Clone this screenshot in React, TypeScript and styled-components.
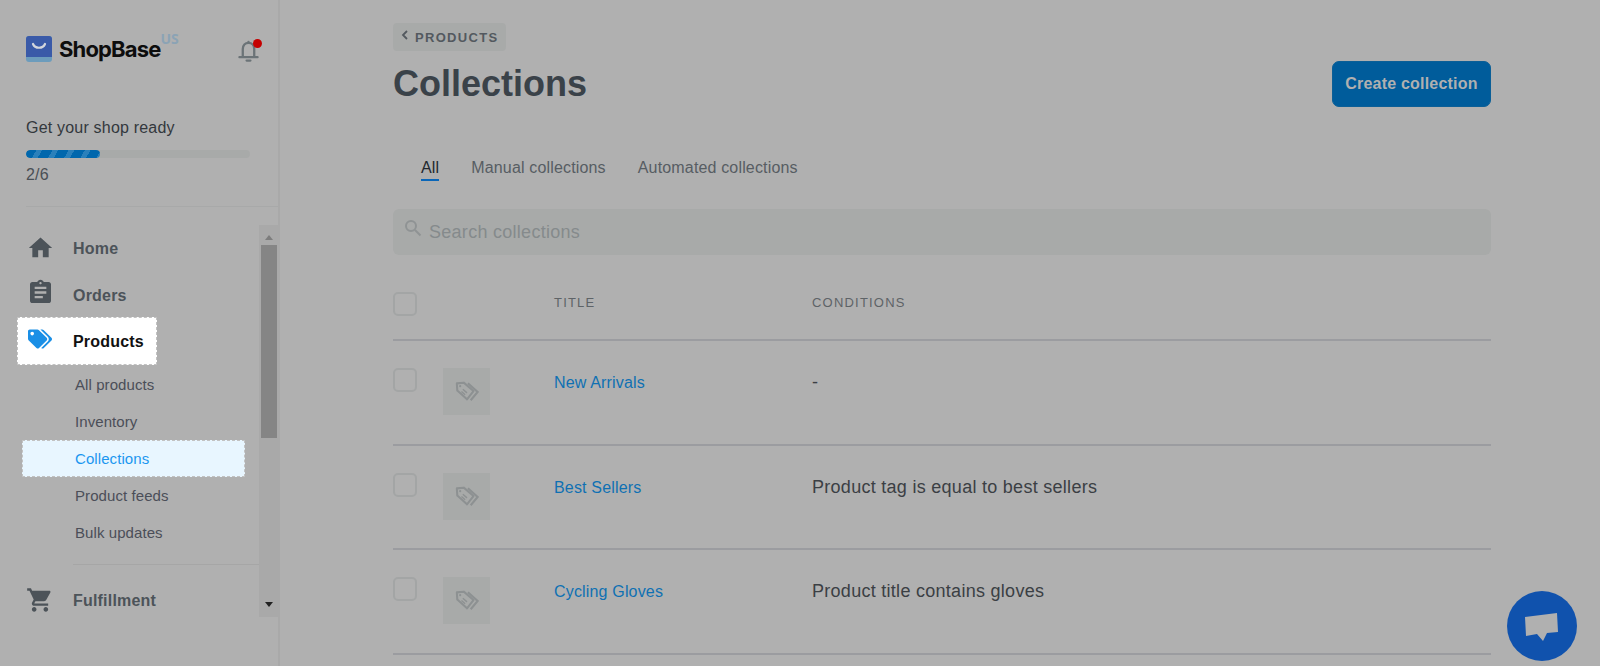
import React from "react";
import styled, { createGlobalStyle } from "styled-components";
import { FaTags } from "react-icons/fa";

const Global = createGlobalStyle`
  html, body { margin: 0; padding: 0; height: 100%; overflow: hidden; background: #b0b0b0; }
  * { box-sizing: border-box; }
  body { font-family: "Liberation Sans", Arial, sans-serif; }
`;

const Page = styled.div`
  display: flex;
  width: 1600px;
  height: 666px;
  overflow: hidden;
  background: #b0b0b0;
`;

const Sidebar = styled.aside`
  flex: none;
  width: 280px;
  height: 100%;
  border-right: 2px solid #a9a9a9;
  padding-top: 36px;
`;

const Brand = styled.div`
  display: flex;
  align-items: flex-start;
  height: 26px;
  padding: 0 19px 0 26px;
`;

const BrandName = styled.span`
  margin-left: 7px;
  font-family: Inter, sans-serif;
  font-weight: 700;
  font-size: 22px;
  line-height: 26px;
  letter-spacing: -0.85px;
  color: #0d0d0d;
`;

const Region = styled.span`
  margin-top: -5px;
  font-family: "Open Sans", sans-serif;
  font-weight: 700;
  font-size: 14px;
  line-height: 16px;
  color: #8ba3b5;
`;

const BellWrap = styled.div`
  position: relative;
  margin-left: auto;
  margin-top: 3px;
  width: 21px;
  height: 24px;
`;

const BellDot = styled.span`
  position: absolute;
  top: 0;
  right: -3px;
  width: 9px;
  height: 9px;
  border-radius: 50%;
  background: #c50000;
`;

const Setup = styled.div`
  margin-top: 56px;
  padding-left: 26px;
  font-size: 16px;
  line-height: 20px;
  letter-spacing: 0.2px;
  color: #33383d;
`;

const ProgressTrack = styled.div`
  width: 224px;
  height: 8px;
  margin-top: 12px;
  border-radius: 4px;
  background: #a8aaa9;
  overflow: hidden;
`;

const ProgressFill = styled.div`
  height: 100%;
  border-radius: 4px;
  background: repeating-linear-gradient(
    120deg,
    #0067ad 0 9px,
    #2a80bb 9px 14px
  );
`;

const SetupCount = styled.div`
  margin-top: 7px;
  color: #4a4f55;
`;

const HeadDivider = styled.div`
  height: 1px;
  margin: 21px 0 0 26px;
  background: #a8a9a9;
`;

const NavShell = styled.div`
  display: flex;
  height: 392px;
  margin-top: 18px;
`;

const Nav = styled.nav`
  flex: 1;
  min-width: 0;
  overflow: hidden;
`;

const NavRow = styled.div<{ $active?: boolean }>`
  display: flex;
  align-items: center;
  height: ${(p) => (p.$active ? "47.5px" : "46.5px")};
  width: fit-content;
  margin-top: ${(p) => (p.$active ? "-1px" : "0")};
  margin-left: ${(p) => (p.$active ? "17px" : "28px")};
  padding: ${(p) => (p.$active ? "2px 13px 0 11px" : "2px 0 0")};
  background: ${(p) => (p.$active ? "#fff" : "transparent")};
  outline: ${(p) => (p.$active ? "1px dashed #c2c2c2" : "none")};
  outline-offset: -1px;
  font-weight: 700;
  font-size: 16px;
  letter-spacing: 0.2px;
  color: ${(p) => (p.$active ? "#111" : "#4c5359")};
`;

const NavIcon = styled.span<{ $lift: number; $left?: number }>`
  display: flex;
  flex: none;
  width: 45px;
  transform: translate(${(p) => p.$left ?? 0}px, ${(p) => -p.$lift}px);
`;

const SubItem = styled.div<{ $active?: boolean }>`
  display: flex;
  align-items: center;
  height: ${(p) => (p.$active ? "37px" : "37.5px")};
  width: 223px;
  margin-top: ${(p) => (p.$active ? "-1px" : "0")};
  margin-left: 22px;
  padding-left: 53px;
  background: ${(p) => (p.$active ? "#e8f6ff" : "transparent")};
  outline: ${(p) => (p.$active ? "1px dashed #c2c2c2" : "none")};
  outline-offset: -1px;
  font-size: 15px;
  letter-spacing: 0.08px;
  color: ${(p) => (p.$active ? "#1b96f0" : "#4b4e58")};
`;

const SubList = styled.div`
  padding-top: 1px;
`;

const NavDivider = styled.div`
  height: 1px;
  margin: 12px 0 12px 73px;
  background: #a6a6a6;
`;

const Scrollbar = styled.div`
  flex: none;
  display: flex;
  flex-direction: column;
  align-items: center;
  width: 19px;
  background: #a9a9a9;
`;

const ScrollArrow = styled.span<{ $down?: boolean }>`
  flex: none;
  width: 0;
  height: 0;
  margin: ${(p) => (p.$down ? "auto 0 10px" : "10px 0 5px")};
  border-left: 4.5px solid transparent;
  border-right: 4.5px solid transparent;
  ${(p) =>
    p.$down ? "border-top: 5px solid #222;" : "border-bottom: 5px solid #7d7d7d;"}
`;

const ScrollThumb = styled.div`
  flex: none;
  width: 16px;
  height: 193px;
  background: #858585;
`;

const Main = styled.main`
  flex: 1;
  min-width: 0;
  padding: 23px 109px 0 113px;
`;

const Breadcrumb = styled.div`
  display: inline-flex;
  align-items: center;
  gap: 6px;
  height: 28px;
  width: 113px;
  padding: 0 0 0 8px;
  border-radius: 4px;
  background: #a8aaa9;
  font-weight: 700;
  font-size: 13px;
  letter-spacing: 1.3px;
  color: #53595f;
  vertical-align: top;
`;

const BackChevron = styled.svg`
  flex: none;
  margin-top: -4px;
`;

const TitleRow = styled.div`
  display: flex;
  justify-content: space-between;
  align-items: center;
  margin-top: 10px;
  height: 46px;
`;

const Title = styled.h1`
  margin: 0;
  font-size: 36px;
  font-weight: 700;
  color: #3a4249;
`;

const PrimaryButton = styled.button`
  width: 159px;
  height: 46px;
  padding: 0;
  border: 1px solid #0b5f97;
  border-radius: 7px;
  background: #005c9b;
  font-family: inherit;
  font-weight: 700;
  font-size: 16px;
  letter-spacing: 0.2px;
  color: #b0b0b0;
`;

const Tabs = styled.div`
  display: flex;
  gap: 32px;
  height: 28px;
  margin-top: 46px;
  padding-left: 28px;
`;

const Tab = styled.div<{ $active?: boolean }>`
  height: 28px;
  line-height: 29px;
  font-size: 16px;
  letter-spacing: 0.16px;
  color: ${(p) => (p.$active ? "#22282e" : "#575d63")};
  border-bottom: 2px solid ${(p) => (p.$active ? "#0a66b8" : "transparent")};
`;

const Search = styled.div`
  display: flex;
  align-items: center;
  height: 46px;
  margin-top: 28px;
  padding-left: 11px;
  border-radius: 6px;
  background: #a8aaa9;
  font-size: 18px;
  letter-spacing: 0.28px;
  color: #858a8c;
`;

const SearchIcon = styled.svg`
  flex: none;
  width: 18px;
  height: 18px;
  margin: -9px 7px 0 0;
`;

const Grid = styled.div<{ $header?: boolean }>`
  display: grid;
  grid-template-columns: 50px 111px 258px 1fr;
  align-items: start;
  height: ${(p) => (p.$header ? "86px" : "104.5px")};
  padding-top: ${(p) => (p.$header ? "37px" : "27px")};
  border-bottom: 2px solid #9b9ca0;
`;

const Check = styled.span`
  display: block;
  width: 24px;
  height: 24px;
  border: 2px solid #a3a5a5;
  border-radius: 5px;
`;

const HeadCell = styled.div`
  font-size: 13px;
  line-height: 22px;
  letter-spacing: 1.2px;
  color: #5e6367;
`;

const Thumb = styled.div`
  display: flex;
  align-items: center;
  justify-content: center;
  width: 47px;
  height: 47px;
  background: #a8aaa9;
`;

const LinkCell = styled.div`
  font-size: 16px;
  line-height: 29px;
  letter-spacing: 0.17px;
  color: #0f70b3;
`;

const CondCell = styled.div`
  font-size: 18px;
  line-height: 29px;
  letter-spacing: 0.28px;
  color: #3b3f44;
`;

const ChatButton = styled.div`
  position: fixed;
  left: 1507px;
  top: 591px;
  display: flex;
  align-items: center;
  justify-content: center;
  width: 70px;
  height: 70px;
  border-radius: 50%;
  background: #1052ad;
`;

const rows = [
  { title: "New Arrivals", cond: "-" },
  { title: "Best Sellers", cond: "Product tag is equal to best sellers" },
  { title: "Cycling Gloves", cond: "Product title contains gloves" },
];

const icon = (d: string) => (
  <svg width="28" height="28" viewBox="0 0 24 24" fill="#4c5359" aria-hidden="true">
    <path d={d} />
  </svg>
);

const ThumbTag = () => (
  <svg width="24" height="21" viewBox="0 0 26 22" fill="none" stroke="#8d9192" strokeWidth="2.2" aria-hidden="true">
    <path d="M2 2.2 9.5 1.4 20 10.5 13 19.5 2.5 10z" strokeLinejoin="round" />
    <path d="M14 2 24.5 11.5 17 20.5" />
    <path d="M8.5 8.5 13 12.5M7 11l4 3.5" strokeWidth="1.5" />
    <circle cx="5.6" cy="5.2" r="1.2" fill="#8d9192" stroke="none" />
  </svg>
);

export default function App() {
  return (
    <Page>
      <Global />
      <Sidebar>
        <Brand>
          <svg width="26" height="26" viewBox="0 0 26 26" aria-hidden="true">
            <path d="M3 0h20a3 3 0 0 1 3 3v20a3 3 0 0 1-3 3H3a3 3 0 0 1-3-3V3a3 3 0 0 1 3-3z" fill="#6c9cbc" />
            <path d="M3 0h20a3 3 0 0 1 3 3v18H0V3a3 3 0 0 1 3-3z" fill="#3a5aa8" />
            <path d="M7 8c2 5 10 5 12 0" fill="none" stroke="#d3d6dc" strokeWidth="2.2" strokeLinecap="round" />
          </svg>
          <BrandName>ShopBase</BrandName>
          <Region>US</Region>
          <BellWrap>
            <svg width="21" height="24" viewBox="0 0 22 24" fill="none" stroke="#6b7377" strokeWidth="2.4" aria-hidden="true">
              <path d="M5 18V10c0-4 2.5-6.5 6-6.5S17 6 17 10v8" />
              <path d="M1.5 18.5h19" strokeLinecap="round" />
              <path d="M9 22h4" strokeLinecap="round" />
              <circle cx="11" cy="2.5" r="1.2" fill="#6b7377" stroke="none" />
            </svg>
            <BellDot />
          </BellWrap>
        </Brand>
        <Setup>
          Get your shop ready
          <ProgressTrack>
            <ProgressFill style={{ width: `${(2 / 6) * 100 - 0.5}%` }} />
          </ProgressTrack>
          <SetupCount>2/6</SetupCount>
        </Setup>
        <HeadDivider />
        <NavShell>
          <Nav>
            <NavRow>
              <NavIcon $lift={1} $left={-1.5}>{icon("M10 20v-6h4v6h5v-8h3L12 3 2 12h3v8z")}</NavIcon>
              Home
            </NavRow>
            <NavRow>
              <NavIcon $lift={3.5} $left={-1.5}>
                {icon(
                  "M19 3h-4.18C14.4 1.84 13.3 1 12 1c-1.3 0-2.4.84-2.82 2H5c-1.1 0-2 .9-2 2v14c0 1.1.9 2 2 2h14c1.1 0 2-.9 2-2V5c0-1.1-.9-2-2-2zm-7 0c.55 0 1 .45 1 1s-.45 1-1 1-1-.45-1-1 .45-1 1-1zm2 14H7v-2h7v2zm3-4H7v-2h10v2zm0-4H7V7h10v2z"
                )}
              </NavIcon>
              Orders
            </NavRow>
            <NavRow $active>
              <NavIcon $lift={3}>
                <FaTags size={24} color="#1a8fe6" />
              </NavIcon>
              Products
            </NavRow>
            <SubList>
              <SubItem>All products</SubItem>
              <SubItem>Inventory</SubItem>
              <SubItem $active>Collections</SubItem>
              <SubItem>Product feeds</SubItem>
              <SubItem>Bulk updates</SubItem>
            </SubList>
            <NavDivider />
            <NavRow>
              <NavIcon $lift={1} $left={-2}>
                {icon(
                  "M7 18c-1.1 0-1.99.9-1.99 2S5.9 22 7 22s2-.9 2-2-.9-2-2-2zM1 2v2h2l3.6 7.59-1.35 2.45c-.16.28-.25.61-.25.96 0 1.1.9 2 2 2h12v-2H7.42c-.14 0-.25-.11-.25-.25l.03-.12.9-1.63h7.45c.75 0 1.41-.41 1.75-1.03l3.58-6.49c.08-.14.12-.31.12-.48 0-.55-.45-1-1-1H5.21l-.94-2H1zm16 16c-1.1 0-1.99.9-1.99 2s.89 2 1.99 2 2-.9 2-2-.9-2-2-2z"
                )}
              </NavIcon>
              Fulfillment
            </NavRow>
          </Nav>
          <Scrollbar>
            <ScrollArrow />
            <ScrollThumb />
            <ScrollArrow $down />
          </Scrollbar>
        </NavShell>
      </Sidebar>
      <Main>
        <Breadcrumb>
          <BackChevron width="8" height="10" viewBox="0 0 8 10" fill="none" stroke="#53595f" strokeWidth="1.8" aria-hidden="true">
            <path d="M6 1 2 5l4 4" />
          </BackChevron>
          PRODUCTS
        </Breadcrumb>
        <TitleRow>
          <Title>Collections</Title>
          <PrimaryButton>Create collection</PrimaryButton>
        </TitleRow>
        <Tabs>
          <Tab $active>All</Tab>
          <Tab>Manual collections</Tab>
          <Tab>Automated collections</Tab>
        </Tabs>
        <Search>
          <SearchIcon viewBox="0 0 18 18" fill="none" stroke="#8f9394" strokeWidth="2" aria-hidden="true">
            <circle cx="7" cy="7" r="5" />
            <path d="m11 11 5.5 5.5" />
          </SearchIcon>
          Search collections
        </Search>
        <Grid $header>
          <Check />
          <span />
          <HeadCell>TITLE</HeadCell>
          <HeadCell>CONDITIONS</HeadCell>
        </Grid>
        {rows.map((r) => (
          <Grid key={r.title}>
            <Check />
            <Thumb>
              <ThumbTag />
            </Thumb>
            <LinkCell>{r.title}</LinkCell>
            <CondCell>{r.cond}</CondCell>
          </Grid>
        ))}
      </Main>
      <ChatButton>
        <svg width="34" height="32" viewBox="0 0 34 32" aria-hidden="true">
          <path d="M0 7 32 3l1 19-11 1-4 8-6-7-11 2z" fill="#b0b0b0" />
        </svg>
      </ChatButton>
    </Page>
  );
}
